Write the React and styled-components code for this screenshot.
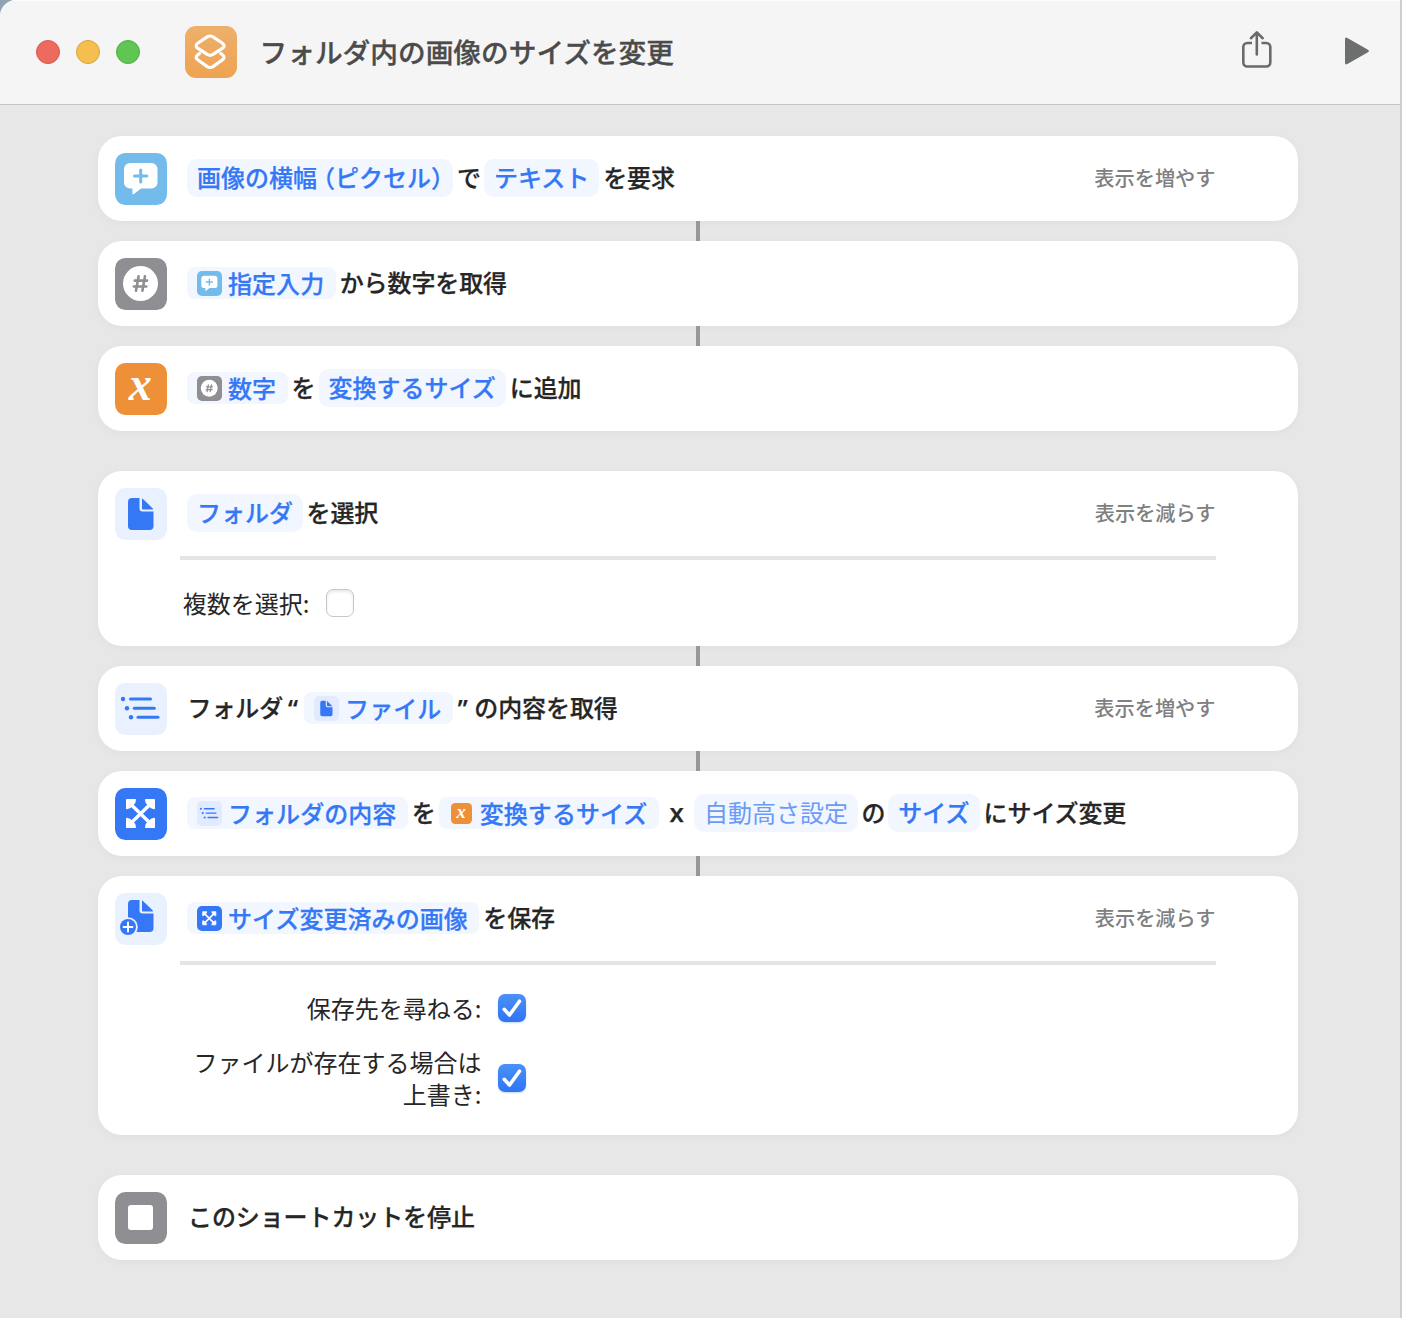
import React from "react";
import styled, { createGlobalStyle } from "styled-components";

const Global = createGlobalStyle`
  html, body { margin: 0; padding: 0; background: #8fa3b5; overflow: hidden; }
  *, *::before, *::after { box-sizing: border-box; }
`;

const Window = styled.div`
  width: 1402px;
  height: 1318px;
  display: flex;
  flex-direction: column;
  background: #e7e7e7;
  border-right: 2px solid #cfcfcf;
  border-top-left-radius: 16px;
  overflow: hidden;
  font-family: "Noto Sans CJK JP", sans-serif;
  color: #262626;
`;

const TitleBar = styled.header`
  flex: none;
  height: 105px;
  display: flex;
  align-items: center;
  padding: 0 31px 2px 36px;
  background: #f5f5f5;
  border-top: 1px solid #fdfdfd;
  border-bottom: 1px solid #c3c4c4;
`;

const Lights = styled.div`
  display: flex;
  gap: 16px;
`;

const Light = styled.span`
  width: 24px;
  height: 24px;
  border-radius: 50%;
  background: ${(p) => p.$fill};
  border: 1px solid ${(p) => p.$edge};
`;

const AppIcon = styled.div`
  width: 52px;
  height: 52px;
  margin: 0 22.500px 0 45px;
  border-radius: 11px;
  background: linear-gradient(#edb06c, #eea352);
`;

const Title = styled.h1`
  margin: 0;
  flex: 1;
  padding-bottom: 2px;
  font-size: 27.7px;
  line-height: 40px;
  font-weight: 500;
  color: #4b4b4b;
  -webkit-text-stroke: 0.3px currentColor;
  white-space: nowrap;
`;

const Tool = styled.button`
  padding: 0 0 ${(p) => p.$lift}px;
  border: 0;
  background: none;
  display: flex;
  margin-left: ${(p) => p.$gap || 0}px;
`;

const Flow = styled.main`
  flex: 1;
  display: flex;
  flex-direction: column;
  padding: 31px 102px 0 98px;
`;

const Card = styled.section`
  flex: none;
  height: ${(p) => p.$h || 85}px;
  border-radius: 24px;
  background: #fff;
  box-shadow: 0 2px 10px rgba(0, 0, 0, 0.035);
`;

const Link = styled.div`
  flex: none;
  width: 4px;
  height: 20px;
  align-self: center;
  background: #98989c;
`;

const Space = styled.div`
  flex: none;
  height: 40px;
`;

const Head = styled.div`
  height: 85px;
  display: flex;
  align-items: center;
  padding: 0 82.500px 0 17px;
`;

const Tile = styled.span`
  flex: none;
  display: block;
  width: ${(p) => p.$size}px;
  height: ${(p) => p.$size}px;
  border-radius: ${(p) => p.$size * 0.2}px;
  background: ${(p) => p.$bg};
  svg { display: block; width: 100%; height: 100%; overflow: visible; }
`;

const Sentence = styled.div`
  flex: 1;
  display: flex;
  align-items: center;
  margin-left: ${(p) => p.$lead || 20}px;
  padding-bottom: 1px;
  font-size: 24px;
  line-height: 38px;
  font-weight: 500;
  -webkit-text-stroke: 0.25px currentColor;
  white-space: nowrap;
`;

const Word = styled.span`
  margin: 0 ${(p) => (p.$after === undefined ? 3 : p.$after)}px 0 ${(p) => (p.$before === undefined ? 4 : p.$before)}px;
  padding-bottom: 2px;
  letter-spacing: -0.1px;
`;

const Quote = styled.span`
  width: 11px;
  margin: 0 ${(p) => p.$after}px 0 5px;
  font-family: "Open Sans", sans-serif;
  font-weight: 600;
  font-size: 25px;
`;

const Times = styled.span`
  width: 14px;
  margin: 0 10.500px;
  padding-bottom: 3px;
  text-align: center;
  font-family: "Open Sans", sans-serif;
  font-weight: 600;
  font-size: 26px;
`;

const Token = styled.span`
  height: 38px;
  padding: 0 10px;
  border-radius: 10px;
  background: #f2f6fe;
  color: ${(p) => (p.$empty ? "#6b9bf8" : "#3478f6")};
  font-weight: ${(p) => (p.$empty ? 400 : 500)};
  -webkit-text-stroke-width: ${(p) => (p.$empty ? 0 : 0.25)}px;
  line-height: 36px;
`;

const VarToken = styled.span`
  display: flex;
  align-items: center;
  gap: ${(p) => (p.$small ? 8 : 6)}px;
  height: 32px;
  padding: 0 11.500px 0 ${(p) => (p.$small ? 12 : 10)}px;
  border-radius: 8px;
  background: #f2f6fe;
  color: #3478f6;
  line-height: 32px;
  > span:last-child { letter-spacing: 0.05px; }
`;

const OpenParen = styled.span`
  margin-left: 6px;
  font-feature-settings: "halt";
`;

const CloseParen = styled.span`
  font-feature-settings: "halt";
`;

const Toggle = styled.span`
  padding-bottom: 2px;
  font-size: 20.2px;
  line-height: 30px;
  font-weight: 500;
  color: #808080;
  white-space: nowrap;
`;

const Options = styled.div`
  margin: 0 82px;
  border-top: 4px solid #e5e5e5;
  padding-top: ${(p) => p.$top}px;
  display: flex;
  flex-direction: column;
  gap: 22px;
`;

const Option = styled.label`
  display: flex;
  align-items: center;
  gap: 16.500px;
  width: ${(p) => p.$w}px;
  justify-content: flex-end;
  text-align: right;
  white-space: nowrap;
  font-size: 24px;
  line-height: 32px;
`;

const Box = styled.i`
  flex: none;
  width: 28px;
  height: 28px;
  border-radius: 7px;
  border: ${(p) => (p.$on ? "0" : "1.5px solid #c6c6c6")};
  background: ${(p) => (p.$on ? "linear-gradient(#4b91f8, #2f74f5)" : "#fff")};
  box-shadow: ${(p) => (p.$on ? "0 1px 2px rgba(52,120,246,.3)" : "inset 0 2px 3px rgba(0,0,0,.09)")};
  svg { display: block; }
`;

const BLUE = "#3478f6";

const glyphs = {
  ask: {
    bg: "#72bbea",
    art: (
      <>
        <path fill="#fff" d="M15 10h21.500a6 6 0 0 1 6 6v13.500a6 6 0 0 1-6 6H26l-7 5.500q-1.600 1-1.600-.8V35.500H15a6 6 0 0 1-6-6V16a6 6 0 0 1 6-6z" />
        <path stroke="#72bbea" strokeWidth="3" strokeLinecap="round" d="M25.700 17v12M19.500 23h12.400" />
      </>
    ),
  },
  number: {
    bg: "#8e8e93",
    art: (
      <>
        <circle cx="25.500" cy="25.500" r="17.500" fill="#fff" />
        <path stroke="#8e8e93" strokeWidth="2.600" strokeLinecap="round" d="M23.600 18.300 21 32.700M30 18.300 27.400 32.700M19.700 22.600h12.400M18.900 28.500h12.400" />
      </>
    ),
  },
  variable: {
    bg: "#ee9038",
    art: (
      <text transform="translate(25.300 36.700) scale(0.94 1)" textAnchor="middle" fontFamily="Liberation Serif, serif" fontStyle="italic" fontWeight="700" fontSize="49" fill="#fff" stroke="none">x</text>
    ),
  },
  file: {
    bg: "#e9f0fe",
    art: (
      <>
        <path fill={BLUE} d="M17 10h7.500v10.500a3 3 0 0 0 3 3H38.500V38a4 4 0 0 1-4 4H17a4 4 0 0 1-4-4V14a4 4 0 0 1 4-4z" />
        <path fill={BLUE} d="M27 10.500q.3-.2.700.2L37.800 20.600q.5.900-.2.900H28q-1 0-1-1z" />
      </>
    ),
  },
  list: {
    bg: "#e9f0fe",
    art: (
      <g fill={BLUE}>
        <circle cx="8" cy="16" r="2.200" />
        <circle cx="12" cy="25.200" r="2.200" />
        <circle cx="16" cy="34.300" r="2.200" />
        <rect x="14" y="14.500" width="23" height="3" rx="1.500" />
        <rect x="17.800" y="23.700" width="23" height="3" rx="1.500" />
        <rect x="21.500" y="32.800" width="23" height="3" rx="1.500" />
      </g>
    ),
  },
  resize: {
    bg: BLUE,
    art: (
      <>
        <path stroke="#fff" strokeWidth="3.400" d="M15 15.500l21 20.500M36 15.500 15 36" />
        <path fill="#fff" stroke="#fff" strokeWidth="1.600" strokeLinejoin="round" d="M11.800 11.800h8.400l-.6 2.800-5 5-2.800.8zM39.200 11.800h-8.400l.6 2.800 5 5 2.800.8zM11.800 39.200h8.400l-.6-2.800-5-5-2.800-.8zM39.200 39.200h-8.400l.6-2.800 5-5 2.800-.8z" />
      </>
    ),
  },
  save: {
    bg: "#e9f0fe",
    art: (
      <>
        <path fill={BLUE} d="M17 7h7.500v10.500a3 3 0 0 0 3 3H38.500V35a4 4 0 0 1-4 4H17a4 4 0 0 1-4-4V11a4 4 0 0 1 4-4z" />
        <path fill={BLUE} d="M27 7.500q.3-.2.700.2L37.800 17.600q.5.900-.2.900H28q-1 0-1-1z" />
        <circle cx="13" cy="34" r="9.800" fill="#e9f0fe" />
        <circle cx="13" cy="34" r="8" fill={BLUE} />
        <path stroke="#fff" strokeWidth="2" strokeLinecap="round" d="M13 29.600v8.800M8.600 34h8.800" />
      </>
    ),
  },
  stop: {
    bg: "#8e8e93",
    art: <rect x="13" y="13" width="25" height="25" rx="3" fill="#fff" />,
  },
};

function Icon({ name, size = 52, bg }) {
  const g = glyphs[name];
  return (
    <Tile $size={size} $bg={bg || g.bg}>
      <svg viewBox="0 0 52 52" fill="none">{g.art}</svg>
    </Tile>
  );
}

function Variable({ icon, small, bg, children }) {
  return (
    <VarToken $small={small}>
      <Icon name={icon} size={small ? 21 : 25} bg={bg} />
      <span>{children}</span>
    </VarToken>
  );
}

function Action({ icon, lead, toggle, children }) {
  return (
    <Head>
      <Icon name={icon} />
      <Sentence $lead={lead}>{children}</Sentence>
      {toggle && <Toggle>{toggle}</Toggle>}
    </Head>
  );
}

function Check({ on }) {
  return (
    <Box $on={on}>
      {on && (
        <svg width="28" height="28" viewBox="0 0 28 28" fill="none">
          <path d="M6.200 15.300 11.500 21 21.500 7.200" stroke="#fff" strokeWidth="3.600" strokeLinecap="round" strokeLinejoin="round" />
        </svg>
      )}
    </Box>
  );
}

export default function App() {
  return (
    <>
      <Global />
      <Window>
        <TitleBar>
          <Lights>
            <Light $fill="#ec6a5e" $edge="#d9584c" />
            <Light $fill="#f4bf4f" $edge="#d9a33c" />
            <Light $fill="#61c554" $edge="#4fae42" />
          </Lights>
          <AppIcon>
            <svg width="52" height="52" viewBox="0 0 52 52" fill="none" stroke="#fff" strokeWidth="3.200" strokeLinejoin="round" strokeLinecap="round">
              <path d="M22.200 10.900q2.900-1.800 5.800 0L37.200 17q3.800 2.600 0 5.400L28 28.400q-2.900 1.800-5.800 0L13 22.400q-3.800-2.800 0-5.400z" />
              <path d="M14.500 27.500L12.800 28.800q-3.400 2.600.2 5.200l9.200 6.600q2.900 1.800 5.800 0L37.200 34q3.600-2.600.2-5.200L35.700 27.500" />
            </svg>
          </AppIcon>
          <Title>フォルダ内の画像のサイズを変更</Title>
          <Tool $lift={4} aria-label="共有">
            <svg width="32" height="40" viewBox="0 0 32 40" fill="none" stroke="#6a6a6a" strokeWidth="2.600" strokeLinecap="round" strokeLinejoin="round">
              <path strokeLinecap="butt" d="M12 13H7.300a4 4 0 0 0-4 4V32.500a4 4 0 0 0 4 4H26.300a4 4 0 0 0 4-4V17a4 4 0 0 0-4-4H21.500" />
              <path d="M16.800 24.500V3.200M10.900 8.200 16.800 2.400 22.700 8.200" />
            </svg>
          </Tool>
          <Tool $gap={72} $lift={2} aria-label="実行">
            <svg width="25" height="30" viewBox="0 0 25 30" fill="#6d6e6e">
              <path d="M1 3.300Q1 .6 3.400 2L24 13.700q1.800 1.300 0 2.600L3.400 28Q1 29.200 1 26.700z" />
            </svg>
          </Tool>
        </TitleBar>
        <Flow>
          <Card>
            <Action icon="ask" toggle="表示を増やす">
              <Token>画像の横幅<OpenParen>（</OpenParen>ピクセル<CloseParen>）</CloseParen></Token>
              <Word>で</Word>
              <Token>テキスト</Token>
              <Word>を要求</Word>
            </Action>
          </Card>
          <Link />
          <Card>
            <Action icon="number">
              <Variable icon="ask">指定入力</Variable>
              <Word>から数字を取得</Word>
            </Action>
          </Card>
          <Link />
          <Card>
            <Action icon="variable">
              <Variable icon="number">数字</Variable>
              <Word>を</Word>
              <Token>変換するサイズ</Token>
              <Word>に追加</Word>
            </Action>
          </Card>
          <Space />
          <Card $h={175}>
            <Action icon="file" toggle="表示を減らす">
              <Token>フォルダ</Token>
              <Word $before={3.500}>を選択</Word>
            </Action>
            <Options $top={27}>
              <Option $w={174}><span>複数を選択:</span> <Check /></Option>
            </Options>
          </Card>
          <Link />
          <Card>
            <Action icon="list" lead={20.500} toggle="表示を増やす">
              <Word $before={0} $after={0}>フォルダ</Word>
              <Quote $after={5}>“</Quote>
              <Variable icon="file" bg="#e1ebfd">ファイル</Variable>
              <Quote $after={1.500}>”</Quote>
              <Word>の内容を取得</Word>
            </Action>
          </Card>
          <Link />
          <Card>
            <Action icon="resize">
              <Variable icon="list" bg="#e1ebfd">フォルダの内容</Variable>
              <Word>を</Word>
              <Variable icon="variable" small>変換するサイズ</Variable>
              <Times>x</Times>
              <Token $empty>自動高さ設定</Token>
              <Word $before={3.500}>の</Word>
              <Token>サイズ</Token>
              <Word>にサイズ変更</Word>
            </Action>
          </Card>
          <Link />
          <Card $h={259}>
            <Action icon="save" toggle="表示を減らす">
              <Variable icon="resize">サイズ変更済みの画像</Variable>
              <Word>を保存</Word>
            </Action>
            <Options $top={27}>
              <Option $w={346}><span>保存先を尋ねる:</span> <Check on /></Option>
              <Option $w={346}><span>ファイルが存在する場合は<br />上書き:</span> <Check on /></Option>
            </Options>
          </Card>
          <Space />
          <Card>
            <Action icon="stop" lead={21}>
              <Word $before={0}>このショートカットを停止</Word>
            </Action>
          </Card>
        </Flow>
      </Window>
    </>
  );
}
